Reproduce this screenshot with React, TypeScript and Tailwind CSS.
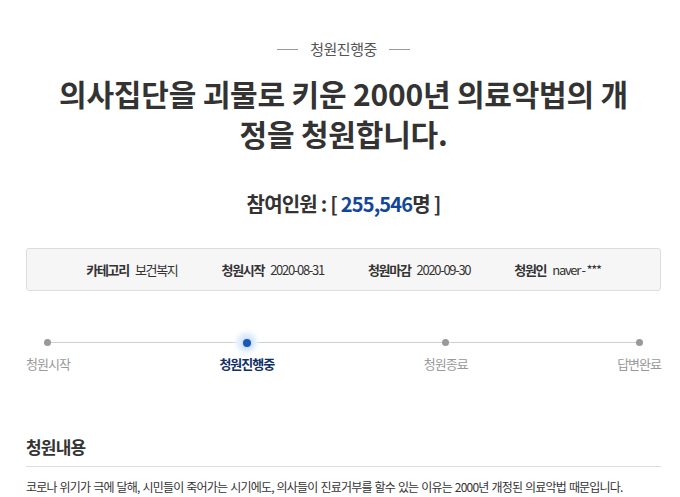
import React from 'react';

const font = { fontFamily: '"Noto Sans CJK KR", "Noto Sans", sans-serif' };

const steps = [
  { label: '청원시작', active: false },
  { label: '청원진행중', active: true },
  { label: '청원종료', active: false },
  { label: '답변완료', active: false },
];

const App: React.FC = () => {
  return (
    <div className="h-screen overflow-hidden bg-white text-[#333]" style={font}>
      <div className="pl-[26px] pr-[19px] pt-[36px]">
        {/* status tag */}
        <div className="flex items-center justify-center gap-[12px] text-[15px] leading-[26px] text-[#555]">
          <span className="w-[21px] h-px bg-[#999]" />
          <span className="tracking-[-0.5px]">청원진행중</span>
          <span className="w-[21px] h-px bg-[#999]" />
        </div>

        {/* title */}
        <h1 className="mt-[11px] text-center text-[30px] font-bold leading-[40px] tracking-[-0.2px] text-[#333]">
          의사집단을 괴물로 키운 2000년 의료악법의 개<br />정을 청원합니다.
        </h1>

        {/* participants */}
        <div className="mt-[36px] text-center text-[20px] font-bold leading-[30px] tracking-[-0.8px] text-[#333]">
          참여인원 : [ <span className="text-[#11479b]">255,546</span>명 ]
        </div>

        {/* info box */}
        <div className="mt-[29px] h-[43px] flex items-center justify-center gap-[44px] border border-[#dcdcdc] rounded-[3px] bg-[#f6f6f6] text-[13px] tracking-[-1.3px] text-[#333]">
          <div className="flex gap-[6px]"><b>카테고리</b><span>보건복지</span></div>
          <div className="flex gap-[6px]"><b>청원시작</b><span>2020-08-31</span></div>
          <div className="flex gap-[6px]"><b>청원마감</b><span>2020-09-30</span></div>
          <div className="flex gap-[6px]"><b>청원인</b><span>naver - ***</span></div>
        </div>

        {/* progress */}
        <div className="relative mt-[41px]">
          <div className="absolute left-[20px] right-[20px] top-[10px] h-px bg-[#cfcfcf]" />
          <div className="relative flex justify-between">
            {steps.map((s) => (
              <div key={s.label} className="flex flex-col items-center">
                <div className="h-[21px] w-[21px] flex items-center justify-center">
                  {s.active ? (
                    <div className="h-[19px] w-[19px] rounded-full bg-[#e6f0fd] flex items-center justify-center shadow-[0_0_4px_2px_#eef5fe]">
                      <div className="h-[8px] w-[8px] rounded-full bg-[#1757b8] shadow-[0_0_3px_2px_#c9ddf8]" />
                    </div>
                  ) : (
                    <div className="h-[7px] w-[7px] rounded-full bg-[#999]" />
                  )}
                </div>
                <span
                  className={`mt-[1px] text-[13px] leading-[20px] tracking-[-1px] ${
                    s.active ? 'font-bold text-[#0f2f66]' : 'text-[#999]'
                  }`}
                >
                  {s.label}
                </span>
              </div>
            ))}
          </div>
        </div>

        {/* content */}
        <h2 className="mt-[60px] text-[17px] font-bold leading-[26px] tracking-[-0.8px] text-[#333]">청원내용</h2>
        <div className="mt-[6px] h-px bg-[#dddddd]" />
        <p className="mt-[10px] text-[12px] leading-[20px] tracking-[-0.8px] [word-spacing:1px] text-[#333]">
          코로나 위기가 극에 달해, 시민들이 죽어가는 시기에도, 의사들이 진료거부를 할수 있는 이유는 2000년 개정된 의료악법 때문입니다.
        </p>
      </div>
    </div>
  );
};

export default App;
